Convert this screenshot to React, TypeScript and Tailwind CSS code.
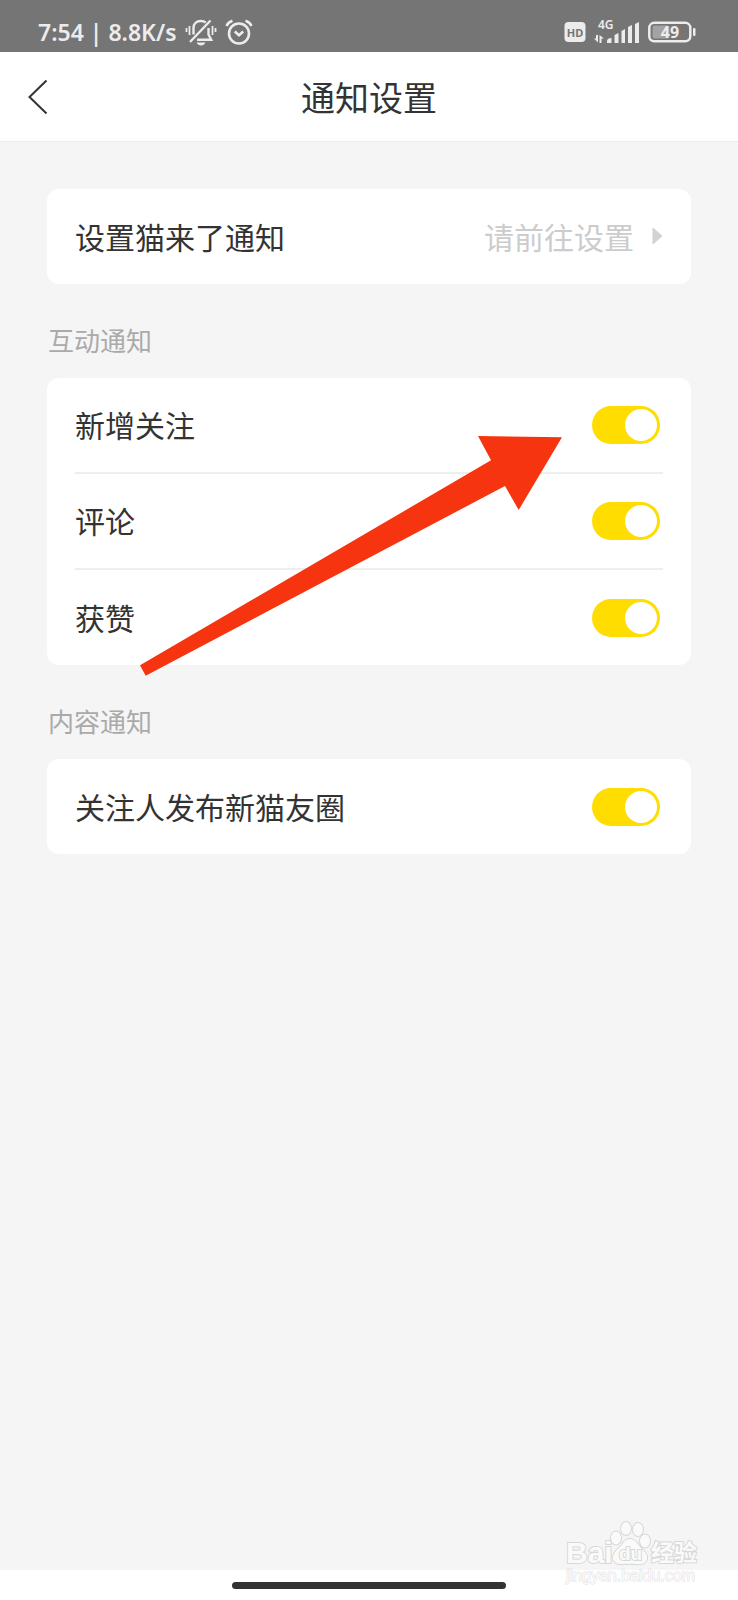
import { FC, useState } from "react";

const MutedBellIcon = () => (
  <svg width="32" height="28" viewBox="0 0 32 28" fill="none" stroke="#ececec" strokeWidth="2.400">
    <path d="M1.500 10v4M4.500 8v9M27.500 8v9M30.500 10v4" strokeWidth="1.800" />
    <path d="M8.500 16.500V10c0-4.500 3-7 7.500-7 2 0 3.500.5 4.700 1.500" />
    <path d="M23.500 10v6.500l2.700 5.300H12" />
    <path d="M25.500 2.500L5 24" />
    <path d="M11.500 24.500h9c-1 2-2.500 2.900-4.500 2.900s-3.500-.9-4.500-2.900z" fill="#ececec" stroke="none" />
  </svg>
);

const AlarmIcon = () => (
  <svg width="28" height="28" viewBox="0 0 28 28" fill="none" stroke="#ececec" strokeWidth="2.600">
    <circle cx="14" cy="15.500" r="10" />
    <path d="M1.500 8C2.500 5.500 4.500 3.700 7.500 2.800M26.500 8C25.500 5.500 23.500 3.700 20.500 2.800" />
    <path d="M9.800 13.500l4.200 3.800 4.200-3.800" />
  </svg>
);

const HdIcon = () => (
  <svg width="22" height="22" viewBox="0 0 22 22">
    <rect x="0.500" y="1" width="21" height="20" rx="4" fill="#ececec" />
    <text x="11" y="15.500" textAnchor="middle" fontSize="11" fontWeight="700" fontFamily="Noto Sans, sans-serif" fill="#757575">
      HD
    </text>
  </svg>
);

const SignalIcon = () => (
  <svg width="46" height="32" viewBox="0 0 46 32" fill="#ececec">
    <text x="4" y="13" fontSize="12" fontWeight="600" fontFamily="Noto Sans, sans-serif">
      4G
    </text>
    <path d="M2 19h2v7.500L0 22.500h2zM5.500 27v-8l4.500 3.500H7.500V27z" />
    <path d="M13 27v-2c0-2 2-3 4.500-3v5zM20.500 27v-8l4-2v10zM27.500 27V15l3.500-2v14zM34 27V11l4-2v18zM41 27V8l4-2v21z" />
  </svg>
);

const BatteryIcon = () => (
  <svg width="48" height="22" viewBox="0 0 48 22">
    <rect x="1.300" y="1.800" width="41" height="18.500" rx="5" fill="none" stroke="#ececec" strokeWidth="2.500" />
    <rect x="4.500" y="4.500" width="17" height="13" rx="2" fill="#a3a3a3" />
    <rect x="45" y="7" width="2.500" height="8" rx="1" fill="#ececec" />
    <text x="22" y="16.500" textAnchor="middle" fontSize="16" fontWeight="700" fontFamily="Noto Sans, sans-serif" fill="#ececec">
      49
    </text>
  </svg>
);

const StatusBar = () => (
  <div className="flex h-[52px] items-center justify-between bg-[#757575] pt-3 pr-[42px] pl-[38px] text-[#ececec]">
    <div className="flex items-center gap-2">
      <span className="font-['Noto_Sans',sans-serif] text-[23px] leading-6 font-semibold whitespace-nowrap">
        7:54 | 8.8K/s
      </span>
      <MutedBellIcon />
      <AlarmIcon />
    </div>
    <div className="flex items-center gap-2">
      <HdIcon />
      <SignalIcon />
      <BatteryIcon />
    </div>
  </div>
);

const Header = () => (
  <header className="grid h-[90px] grid-cols-[80px_1fr_80px] items-center border-b border-[#ececec] bg-white">
    <button aria-label="返回" className="flex h-full items-center pl-7">
      <svg width="20" height="36" viewBox="0 0 20 36" fill="none" stroke="#333" strokeWidth="2">
        <path d="M18.500 1.500L1.500 18l17 16.500" />
      </svg>
    </button>
    <h1 className="text-center text-[34px] leading-10">通知设置</h1>
  </header>
);

interface SwitchRowProps {
  id: string;
  label: string;
}
const SwitchRow: FC<SwitchRowProps> = ({ id, label }) => {
  const [checked, setChecked] = useState(true);
  return (
    <div className="flex h-24 items-center justify-between border-b-2 border-[#eee] last:h-[95px] last:border-b-0">
      <label htmlFor={id} className="pb-0.5 text-[30px] leading-10">
        {label}
      </label>
      <input
        id={id}
        type="checkbox"
        role="switch"
        checked={checked}
        onChange={() => setChecked(!checked)}
        className="mr-[3px] flex h-[38px] w-[68px] appearance-none items-center rounded-full bg-[#ddd] p-[3px] before:size-8 before:rounded-full before:bg-white checked:justify-end checked:bg-[#ffdd00]"
      />
    </div>
  );
};

const SectionTitle: FC<{ text: string }> = ({ text }) => (
  <h2 className="mt-9 mb-[18px] pl-px text-[26px] leading-10 text-[#aaa]">{text}</h2>
);

const Arrow = () => (
  <svg
    className="pointer-events-none absolute top-[58px] left-[93px]"
    width="422"
    height="240"
    viewBox="0 0 422 240"
  >
    <path d="M422 1.300L338 0l13 24.300L0 229.300l5.700 10.400L365 50l13.700 24z" fill="#f63510" />
  </svg>
);

const Watermark = () => (
  <svg
    className="pointer-events-none absolute right-9 bottom-3"
    width="140"
    height="70"
    viewBox="0 0 140 70"
    fill="#fafafa"
    stroke="#d8d8d8"
    strokeWidth="2"
    paintOrder="stroke"
    fontFamily="Liberation Sans, Noto Sans CJK SC, sans-serif"
  >
    <text x="4" y="45" fontSize="30" fontWeight="700">
      Bai
    </text>
    <ellipse cx="54" cy="20" rx="5" ry="6.500" />
    <ellipse cx="64" cy="10.500" rx="5" ry="6.500" />
    <ellipse cx="76" cy="11.500" rx="5" ry="6.500" />
    <ellipse cx="83" cy="23" rx="5" ry="6.500" />
    <path d="M68 21c6 0 8 6 12 10s7 8 4 12-7 3.500-11 3-7-.5-11 0-9 0-10.500-4 1-8 5-11.500S62 21 68 21z" />
    <text x="57" y="42" fontSize="19" fontWeight="700">
      du
    </text>
    <text x="89" y="43" fontSize="23" fontWeight="700">
      经验
    </text>
    <text x="4" y="63" fontSize="16" stroke="#e2e2e2" strokeWidth="1">
      jingyan.baidu.com
    </text>
  </svg>
);

const App = () => {
  return (
    <div
      lang="zh-CN"
      className="relative flex min-h-screen flex-col bg-[#f5f5f5] font-['Noto_Sans_CJK_SC',sans-serif] text-[#333]"
    >
      <StatusBar />
      <Header />

      <main className="flex-1 px-[47px] pt-[47px]">
        <div className="rounded-xl bg-white px-7">
          <a href="#settings" className="flex h-[95px] items-center justify-between text-[30px] leading-10">
            <span className="pb-0.5">设置猫来了通知</span>
            <span className="flex items-center gap-[18px] pb-0.5 text-[#ccc]">
              请前往设置
              <svg width="11" height="18" viewBox="0 0 11 18">
                <path d="M1 1l9 8-9 8z" fill="#d2d2d2" stroke="#d2d2d2" strokeLinejoin="round" />
              </svg>
            </span>
          </a>
        </div>

        <SectionTitle text="互动通知" />
        <div className="relative">
          <div className="rounded-xl bg-white px-7">
            <SwitchRow id="follow" label="新增关注" />
            <SwitchRow id="comment" label="评论" />
            <SwitchRow id="like" label="获赞" />
          </div>
          <Arrow />
        </div>

        <SectionTitle text="内容通知" />
        <div className="rounded-xl bg-white px-7">
          <SwitchRow id="moments" label="关注人发布新猫友圈" />
        </div>
      </main>

      <footer className="flex h-[30px] items-center justify-center bg-white">
        <div className="h-[7px] w-[37%] rounded-full bg-[#333]" />
      </footer>
      <Watermark />
    </div>
  );
};

export default App;
